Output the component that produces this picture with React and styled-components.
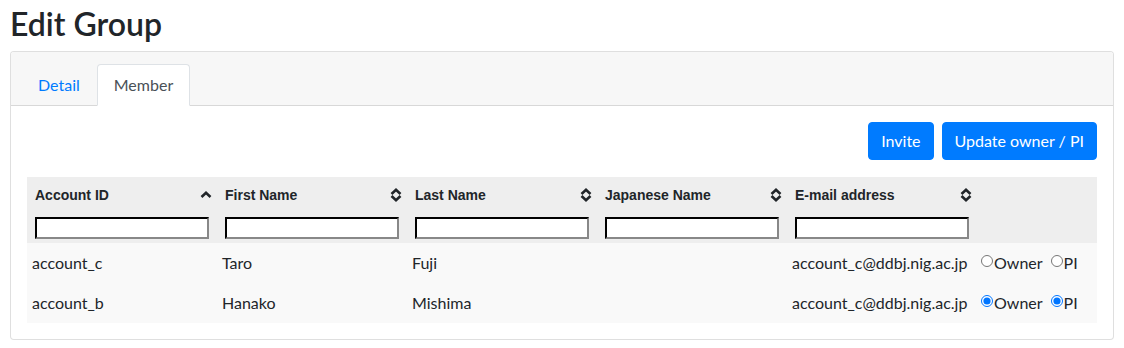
import React from "react";
import styled, { createGlobalStyle } from "styled-components";

const Global = createGlobalStyle`
  html, body { margin: 0; padding: 0; background: #fff; }
  body {
    font-family: Lato, "Noto Sans", sans-serif;
    font-size: 16px;
    line-height: 1.5;
    color: #212529;
  }
  * { box-sizing: border-box; }
`;

const Page = styled.div`
  padding: 5px 10px 10px 10px;
`;

const Title = styled.h2`
  margin: 0 0 8px 0;
  font-size: 32px;
  font-weight: 600;
  line-height: 1.2;
  color: #212529;
`;

const Card = styled.div`
  border: 1px solid rgba(0, 0, 0, 0.125);
  border-radius: 4px;
  background: #fff;
  overflow: hidden;
`;

const CardHeader = styled.div`
  background: #f7f7f7;
  border-bottom: 1px solid rgba(0, 0, 0, 0.125);
  padding: 12px 20px 0 10px;
  display: flex;
  align-items: flex-end;
`;

const Tab = styled.a`
  display: block;
  padding: 8px 16px;
  margin-bottom: -1px;
  border: 1px solid ${(p) => (p.$active ? "#dee2e6" : "transparent")};
  border-bottom-color: ${(p) => (p.$active ? "#fff" : "transparent")};
  border-radius: 4px 4px 0 0;
  background: ${(p) => (p.$active ? "#fff" : "transparent")};
  color: ${(p) => (p.$active ? "#495057" : "#007bff")};
  text-decoration: none;
  cursor: pointer;
  line-height: 24px;
`;

const CardBody = styled.div`
  padding: 16px;
`;

const Toolbar = styled.div`
  display: flex;
  justify-content: flex-end;
  gap: 8px;
  margin-bottom: 17px;
`;

const Button = styled.button`
  font-family: inherit;
  font-size: 16px;
  line-height: 24px;
  padding: 6px 12px;
  border: 1px solid #007bff;
  border-radius: 4px;
  background: #007bff;
  color: #fff;
  cursor: pointer;
`;

const Table = styled.table`
  width: 100%;
  border-collapse: collapse;
  table-layout: fixed;
`;

const Th = styled.th`
  background: #eeeeee;
  padding: 8px 5px 4px 8px;
  text-align: left;
  vertical-align: top;
  font-family: "Liberation Sans", Arial, sans-serif;
  font-size: 14px;
  font-weight: bold;
  color: #212529;
`;

const ThTop = styled.div`
  display: flex;
  justify-content: space-between;
  align-items: center;
  height: 20px;
  margin-bottom: 12px;
`;

const FilterInput = styled.input`
  display: block;
  width: 174px;
  height: 22px;
  border: 2px inset #767676;
  border-color: #333 #888 #888 #333;
  border-radius: 0;
  padding: 1px 2px;
  background: #fff;
  font-size: 13px;
`;

const Tr = styled.tr`
  background: #f9f9f9;
`;

const Td = styled.td`
  padding: 0 5px;
  height: 40px;
  font-size: 16px;
  color: #212529;
  white-space: nowrap;
`;

const RoleCell = styled.td`
  padding: 0 4px;
  height: 40px;
  white-space: nowrap;
  font-size: 16px;
  color: #212529;
`;

const RoleLabel = styled.label`
  margin-right: 8px;
`;

const Radio = styled.input`
  width: 12px;
  height: 12px;
  margin: 0 1px 0 0;
  vertical-align: 2px;
  accent-color: #0075ff;
`;

const SortIcon = ({ dir }) => (
  <svg width="12" height="14" viewBox="0 0 12 14" aria-hidden="true">
    {dir === "up" && (
      <path d="M1.5 9 L6 4.8 L10.5 9" fill="none" stroke="#212529" strokeWidth="2.6" strokeLinejoin="miter" />
    )}
    {dir === "both" && (
      <>
        <path d="M1.5 6 L6 1.8 L10.5 6" fill="none" stroke="#212529" strokeWidth="2.6" strokeLinejoin="miter" />
        <path d="M1.5 8 L6 12.2 L10.5 8" fill="none" stroke="#212529" strokeWidth="2.6" strokeLinejoin="miter" />
      </>
    )}
  </svg>
);

const columns = [
  { label: "Account ID", sort: "up" },
  { label: "First Name", sort: "both" },
  { label: "Last Name", sort: "both" },
  { label: "Japanese Name", sort: "both" },
  { label: "E-mail address", sort: "both" },
];

const rows = [
  { id: "account_c", first: "Taro", last: "Fuji", jp: "", email: "account_c@ddbj.nig.ac.jp", owner: false, pi: false },
  { id: "account_b", first: "Hanako", last: "Mishima", jp: "", email: "account_c@ddbj.nig.ac.jp", owner: true, pi: true },
];

export default function App() {
  return (
    <Page>
      <Global />
      <Title>Edit Group</Title>
      <Card>
        <CardHeader>
          <Tab>Detail</Tab>
          <Tab $active>Member</Tab>
        </CardHeader>
        <CardBody>
          <Toolbar>
            <Button>Invite</Button>
            <Button>Update owner / PI</Button>
          </Toolbar>
          <Table>
            <colgroup>
              <col style={{ width: 190 }} />
              <col style={{ width: 190 }} />
              <col style={{ width: 190 }} />
              <col style={{ width: 190 }} />
              <col style={{ width: 190 }} />
              <col />
            </colgroup>
            <thead>
              <tr>
                {columns.map((c) => (
                  <Th key={c.label}>
                    <ThTop>
                      <span>{c.label}</span>
                      <SortIcon dir={c.sort} />
                    </ThTop>
                    <FilterInput type="text" />
                  </Th>
                ))}
                <Th />
              </tr>
            </thead>
            <tbody>
              {rows.map((r) => (
                <Tr key={r.id}>
                  <Td>{r.id}</Td>
                  <Td>{r.first}</Td>
                  <Td>{r.last}</Td>
                  <Td>{r.jp}</Td>
                  <Td>{r.email}</Td>
                  <RoleCell>
                    <RoleLabel>
                      <Radio type="radio" name={`owner-${r.id}`} defaultChecked={r.owner} />
                      Owner
                    </RoleLabel>
                    <label>
                      <Radio type="radio" name={`pi-${r.id}`} defaultChecked={r.pi} />
                      PI
                    </label>
                  </RoleCell>
                </Tr>
              ))}
            </tbody>
          </Table>
        </CardBody>
      </Card>
    </Page>
  );
}
